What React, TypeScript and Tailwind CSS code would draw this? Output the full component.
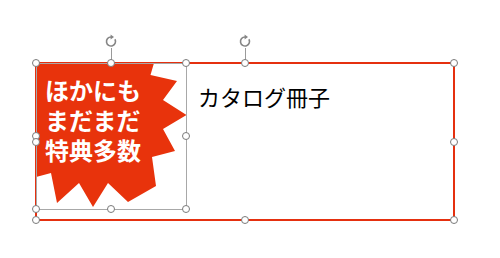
import type { ReactNode } from 'react';

const handles = [
  // inner (picture) frame
  [36, 63], [111, 63], [186, 63], [36, 136], [186, 136], [36, 209], [111, 209], [186, 209],
  // outer (text box) frame
  [245, 63], [454, 63], [36, 142], [454, 142], [36, 220], [245, 220], [454, 220],
];

const burst =
  '36,63 154,63 150.5,75 177,81 163,100 186.5,115 163,129 175,151 152,157 156,186 128,202 108,183 93,207 79,183 57,203 51,173 36,177';

const Handle = ({ x, y }: { x: number; y: number }) => (
  <div
    className="absolute w-[8px] h-[8px] rounded-full bg-white border border-[#7a7a7a]"
    style={{ left: x - 4, top: y - 4 }}
  />
);

const RotateHandle = ({ x }: { x: number }) => (
  <div className="absolute top-[34px] flex flex-col items-center" style={{ left: x - 7 }}>
    <svg width="14" height="14" viewBox="0 0 14 14" fill="none">
      <path d="M7 3 A4.5 4.5 0 1 0 10.9 5.25" stroke="#858585" strokeWidth="1.6" />
      <polygon points="10,3 6.6,0.6 6.6,5.4" fill="#858585" />
    </svg>
    <div className="w-px h-[15px] bg-[#9a9a9a]" />
  </div>
);

const Line = ({ children }: { children: ReactNode }) => <div className="whitespace-nowrap h-[30px]">{children}</div>;

export default function App() {
  return (
    <div
      className="relative w-[500px] h-[258px] bg-white overflow-hidden pl-[35px] pt-[62px]"
      style={{ fontFamily: '"Noto Sans CJK JP", "Noto Sans", sans-serif' }}
    >
      {/* text box with red outline */}
      <div className="relative flex w-[420px] h-[159px] border-2 border-[#e5300f]">
        {/* starburst picture */}
        <div className="relative w-[150px] h-[146px] shrink-0">
          <svg className="absolute inset-0" width="150" height="146" viewBox="37 64 150 146">
            <polygon points={burst} fill="#e8330c" />
          </svg>
          <div className="relative flex flex-col pl-[8px] pt-[13px] text-white font-bold text-[24px] leading-[26px]">
            <Line>ほかにも</Line>
            <Line>まだまだ</Line>
            <Line>特典多数</Line>
          </div>
        </div>
        <div className="ml-[11px] mt-[19px] text-[22px] leading-[26px] text-black whitespace-nowrap">
          カタログ冊子
        </div>
      </div>

      {/* picture selection frame */}
      <div className="absolute left-[36px] top-[63px] w-[151px] h-[147px] border border-[#a8a8a8]" />

      <RotateHandle x={111} />
      <RotateHandle x={245} />
      {handles.map(([x, y], i) => (
        <Handle key={i} x={x} y={y} />
      ))}
    </div>
  );
}
